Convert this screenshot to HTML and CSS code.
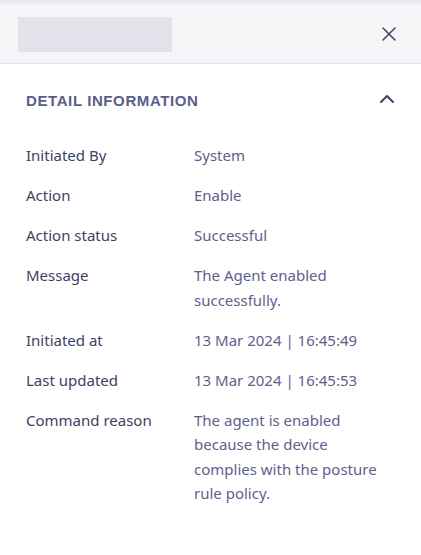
FILE: index.html
```html
<!DOCTYPE html>
<html lang="en">
<head>
<meta charset="utf-8">
<title>Command detail</title>
<link rel="stylesheet" href="styles.css">
</head>
<body>
<div class="drawer">
  <div class="drawer-edge"></div>
  <header class="drawer-header">
    <div class="title-placeholder"></div>
    <button class="icon-btn close-btn" aria-label="Close">
      <svg width="16" height="16" viewBox="0 0 16 16" fill="none" stroke="currentColor" stroke-width="1.5" stroke-linecap="round">
        <path d="M2 2 L14 14 M14 2 L2 14"/>
      </svg>
    </button>
  </header>
  <section class="detail">
    <div class="detail-head">
      <h2 class="detail-title">Detail Information</h2>
      <button class="icon-btn caret-btn" aria-label="Collapse">
        <svg width="16" height="10" viewBox="0 0 16 10" fill="none" stroke="currentColor" stroke-width="2" stroke-linecap="round" stroke-linejoin="round">
          <path d="M2 8 L8 2 L14 8"/>
        </svg>
      </button>
    </div>
    <dl class="detail-grid">
      <dt>Initiated By</dt><dd>System</dd>
      <dt>Action</dt><dd>Enable</dd>
      <dt>Action status</dt><dd>Successful</dd>
      <dt>Message</dt><dd>The Agent enabled successfully.</dd>
      <dt>Initiated at</dt><dd>13 Mar 2024 | 16:45:49</dd>
      <dt>Last updated</dt><dd>13 Mar 2024 | 16:45:53</dd>
      <dt>Command reason</dt><dd>The agent is enabled because the device complies with the posture rule policy.</dd>
    </dl>
  </section>
</div>
</body>
</html>
```
FILE: styles.css
```css
* { box-sizing: border-box; }

html, body {
  margin: 0;
  background: #ffffff;
}

body {
  font-family: "Noto Sans", "Open Sans", sans-serif;
  font-size: 15px;
  color: #3e4163;
}

.drawer {
  width: 421px;
  min-height: 555px;
  background: #ffffff;
}

.drawer-edge {
  height: 5px;
  background: linear-gradient(#e6e6f0, #efeff5);
}

.drawer-header {
  height: 59px;
  background: #f6f6f9;
  border-bottom: 1px solid #e4e3f1;
  display: flex;
  align-items: center;
  justify-content: space-between;
  padding: 0 20px 0 18px;
}

.title-placeholder {
  width: 154px;
  height: 35px;
  background: #e2e2ea;
  margin-top: 1px;
}

.icon-btn {
  border: 0;
  background: none;
  padding: 0;
  color: #3e4163;
  display: flex;
  align-items: center;
  justify-content: center;
  cursor: pointer;
}

.close-btn {
  width: 24px;
  height: 24px;
}

.detail {
  padding: 25px 26px 0 26px;
}

.detail-head {
  display: flex;
  align-items: center;
  justify-content: space-between;
  height: 24px;
}

.detail-title {
  margin: 0;
  font-family: "Liberation Sans", Arial, sans-serif;
  font-size: 15px;
  font-weight: 700;
  letter-spacing: 0.6px;
  text-transform: uppercase;
  color: #5b5e87;
  line-height: 24px;
}

.caret-btn {
  width: 18px;
  height: 18px;
  margin-right: -1px;
  margin-top: -5px;
}

.detail-grid {
  margin: 30px 0 0 0;
  display: grid;
  grid-template-columns: 168px 190px;
  row-gap: 15.5px;
  line-height: 24.5px;
}

.detail-grid dt {
  color: #3e4163;
}

.detail-grid dd {
  margin: 0;
  color: #5e618b;
}
```
